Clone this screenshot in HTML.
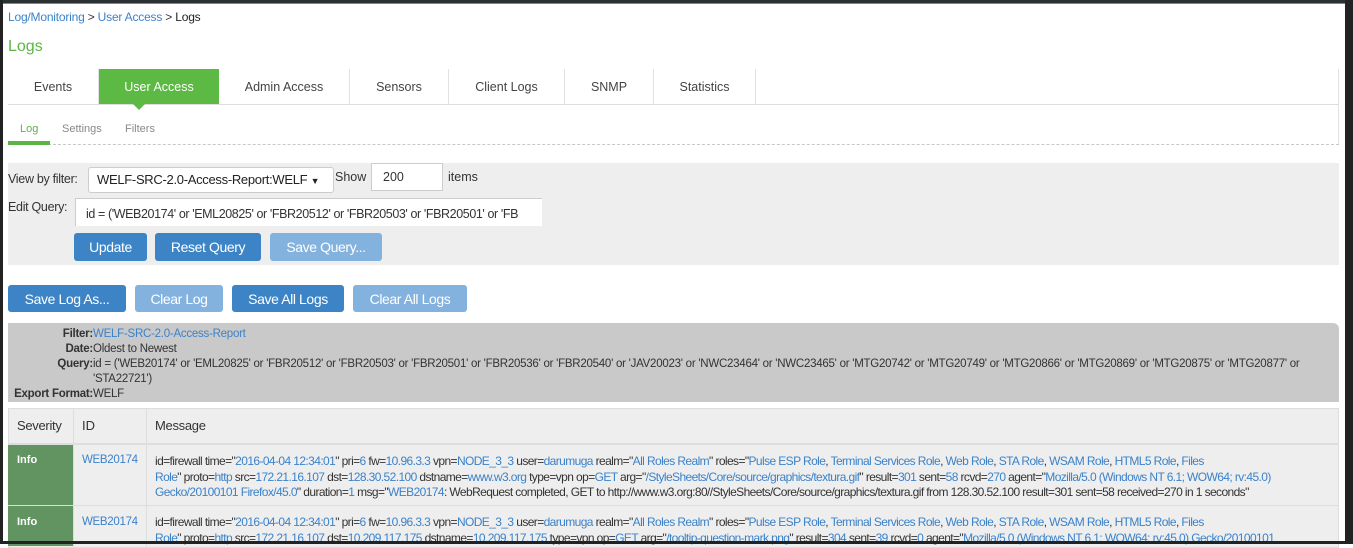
<!DOCTYPE html>
<html><head><meta charset="utf-8"><style>
*{box-sizing:border-box;margin:0;padding:0}
body{width:1353px;height:544px;overflow:hidden;background:#fff;font-family:"Liberation Sans",Arial,sans-serif;font-size:12px;color:#333;position:relative}
.a{position:absolute}
a,.l{color:#3b82c9;text-decoration:none}
.frame-t{left:0;top:0;width:1353px;height:4px;background:#2b3133;border-bottom:1px solid #4cae3c}
.frame-l{left:0;top:0;width:3px;height:544px;background:#222}
.frame-r{left:1345px;top:0;width:8px;height:544px;background:#222}
.frame-b{left:0;top:541px;width:1353px;height:3px;background:#222}
.tab{position:absolute;top:69px;height:35px;line-height:36px;text-align:center;font-size:12.5px;color:#444;border-right:1px solid #e2e2e2}
.btn{position:absolute;height:28px;line-height:28px;text-align:center;color:#fff;background:#3c84c6;border-radius:3px;font-size:14px;letter-spacing:-.4px}
.btn.d{background:#84b2de}
.msg{letter-spacing:-.6px;white-space:nowrap;line-height:15.5px;font-size:12px}
</style></head><body>
<div class="a frame-t"></div>
<div class="a" style="left:8px;top:10px;font-size:12px;letter-spacing:-.2px"><span class="l">Log/Monitoring</span> &gt; <span class="l">User Access</span> &gt; <span style="color:#222">Logs</span></div>
<div class="a" style="left:8px;top:38px;font-size:16px;color:#5cb543">Logs</div>

<div class="a" style="left:8px;top:69px;width:1331px;height:76px;border-right:1px solid #e2e2e2"></div>
<div class="a" style="left:8px;top:104px;width:1331px;height:1px;background:#ddd"></div>
<div class="tab" style="left:8px;width:91px">Events</div>
<div class="tab" style="left:99px;width:120px;background:#5cb943;color:#fff;border-right:none">User Access</div>
<div class="a" style="left:133px;top:104px;width:0;height:0;border-left:6px solid transparent;border-right:6px solid transparent;border-top:6px solid #5cb943"></div>
<div class="tab" style="left:219px;width:131px">Admin Access</div>
<div class="tab" style="left:350px;width:99px">Sensors</div>
<div class="tab" style="left:449px;width:116px">Client Logs</div>
<div class="tab" style="left:565px;width:89px">SNMP</div>
<div class="tab" style="left:654px;width:102px">Statistics</div>

<div class="a" style="left:20px;top:123px;font-size:11px;color:#5cb543">Log</div>
<div class="a" style="left:62px;top:123px;font-size:11px;color:#888">Settings</div>
<div class="a" style="left:125px;top:123px;font-size:11px;color:#888">Filters</div>
<div class="a" style="left:8px;top:144px;width:1331px;border-top:1px dashed #c8c8c8"></div>
<div class="a" style="left:8px;top:141px;width:42px;height:4px;background:#5cb543"></div>

<div class="a" style="left:8px;top:163px;width:1331px;height:102px;background:#eee"></div>
<div class="a" style="left:8px;top:172px;font-size:12.5px;letter-spacing:-.3px">View by filter:</div>
<div class="a" style="left:88px;top:167px;width:246px;height:26px;background:#fff;border:1px solid #ccc;border-radius:3px;font-size:13px;line-height:24px;padding-left:8px;color:#222;letter-spacing:-.3px">WELF-SRC-2.0-Access-Report:WELF <span style="font-size:9px">▼</span></div>
<div class="a" style="left:335px;top:170px;font-size:12.5px">Show</div>
<div class="a" style="left:371px;top:163px;width:72px;height:28px;background:#fff;border:1px solid #ccc;font-size:12.5px;line-height:26px;padding-left:11px">200</div>
<div class="a" style="left:448px;top:170px;font-size:12.5px">items</div>
<div class="a" style="left:8px;top:200px;font-size:12.5px;letter-spacing:-.3px">Edit Query:</div>
<div class="a" style="left:75px;top:198px;width:467px;height:28px;background:#fff;border:1px solid #ccc;border-bottom:none;border-right:none;font-size:12.5px;line-height:30px;padding-left:10px;white-space:nowrap;overflow:hidden;letter-spacing:-.4px">id = ('WEB20174' or 'EML20825' or 'FBR20512' or 'FBR20503' or 'FBR20501' or 'FB</div>
<div class="btn" style="left:74px;top:233px;width:73px">Update</div>
<div class="btn" style="left:155px;top:233px;width:106px">Reset Query</div>
<div class="btn d" style="left:270px;top:233px;width:112px">Save Query...</div>

<div class="btn" style="left:8px;top:285px;width:118px;height:27px">Save Log As...</div>
<div class="btn d" style="left:135px;top:285px;width:88px;height:27px">Clear Log</div>
<div class="btn" style="left:232px;top:285px;width:112px;height:27px">Save All Logs</div>
<div class="btn d" style="left:353px;top:285px;width:114px;height:27px">Clear All Logs</div>

<div class="a" style="left:8px;top:323px;width:1331px;height:79px;background:#c9c9c9;border-radius:0 6px 0 0"></div>
<div class="a" style="left:13px;top:327px;font-size:11.5px;line-height:15px;letter-spacing:-.25px;color:#333">
<div style="white-space:nowrap"><b style="display:inline-block;width:80px;text-align:right;font-weight:bold">Filter:</b><span class="l">WELF-SRC-2.0-Access-Report</span></div>
<div><b style="display:inline-block;width:80px;text-align:right">Date:</b>Oldest to Newest</div>
<div style="white-space:nowrap"><b style="display:inline-block;width:80px;text-align:right">Query:</b>id = ('WEB20174' or 'EML20825' or 'FBR20512' or 'FBR20503' or 'FBR20501' or 'FBR20536' or 'FBR20540' or 'JAV20023' or 'NWC23464' or 'NWC23465' or 'MTG20742' or 'MTG20749' or 'MTG20866' or 'MTG20869' or 'MTG20875' or 'MTG20877' or</div>
<div style="padding-left:80px">'STA22721')</div>
<div><b style="display:inline-block;width:80px;text-align:right">Export Format:</b>WELF</div>
</div>

<div class="a" style="left:8px;top:408px;width:1331px;height:140px;background:#eee;border:1px solid #ddd"></div>
<div class="a" style="left:8px;top:443px;width:1331px;height:2px;background:#ddd"></div>
<div class="a" style="left:8px;top:505px;width:1331px;height:1px;background:#ddd"></div>
<div class="a" style="left:73px;top:408px;width:1px;height:140px;background:#ddd"></div>
<div class="a" style="left:146px;top:408px;width:1px;height:140px;background:#ddd"></div>
<div class="a" style="left:17px;top:418px;font-size:13px;letter-spacing:-.3px">Severity</div>
<div class="a" style="left:82px;top:418px;font-size:13px">ID</div>
<div class="a" style="left:155px;top:418px;font-size:13px;letter-spacing:-.3px">Message</div>
<div class="a" style="left:8px;top:445px;width:65px;height:60px;background:#629461"></div>
<div class="a" style="left:8px;top:506px;width:65px;height:40px;background:#629461"></div>
<div class="a" style="left:17px;top:454px;font-size:11px;font-weight:bold;color:#fff">Info</div>
<div class="a" style="left:17px;top:516px;font-size:11px;font-weight:bold;color:#fff">Info</div>
<div class="a l" style="left:82px;top:454px;font-size:11.5px;letter-spacing:-.3px">WEB20174</div>
<div class="a l" style="left:82px;top:516px;font-size:11.5px;letter-spacing:-.3px">WEB20174</div>
<div class="a msg" style="left:155px;top:454px">id=firewall time="<span class="l">2016-04-04 12:34:01</span>" pri=<span class="l">6</span> fw=<span class="l">10.96.3.3</span> vpn=<span class="l">NODE_3_3</span> user=<span class="l">darumuga</span> realm="<span class="l">All Roles Realm</span>" roles="<span class="l">Pulse ESP Role</span>, <span class="l">Terminal Services Role</span>, <span class="l">Web Role</span>, <span class="l">STA Role</span>, <span class="l">WSAM Role</span>, <span class="l">HTML5 Role</span>, <span class="l">Files</span><br><span class="l">Role</span>" proto=<span class="l">http</span> src=<span class="l">172.21.16.107</span> dst=<span class="l">128.30.52.100</span> dstname=<span class="l">www.w3.org</span> type=vpn op=<span class="l">GET</span> arg="<span class="l">/StyleSheets/Core/source/graphics/textura.gif</span>" result=<span class="l">301</span> sent=<span class="l">58</span> rcvd=<span class="l">270</span> agent="<span class="l">Mozilla/5.0 (Windows NT 6.1; WOW64; rv:45.0)</span><br><span class="l">Gecko/20100101 Firefox/45.0</span>" duration=<span class="l">1</span> msg="<span class="l">WEB20174</span>: WebRequest completed, GET to http://www.w3.org:80//StyleSheets/Core/source/graphics/textura.gif from 128.30.52.100 result=301 sent=58 received=270 in 1 seconds"</div>
<div class="a msg" style="left:155px;top:515px">id=firewall time="<span class="l">2016-04-04 12:34:01</span>" pri=<span class="l">6</span> fw=<span class="l">10.96.3.3</span> vpn=<span class="l">NODE_3_3</span> user=<span class="l">darumuga</span> realm="<span class="l">All Roles Realm</span>" roles="<span class="l">Pulse ESP Role</span>, <span class="l">Terminal Services Role</span>, <span class="l">Web Role</span>, <span class="l">STA Role</span>, <span class="l">WSAM Role</span>, <span class="l">HTML5 Role</span>, <span class="l">Files</span><br><span class="l">Role</span>" proto=<span class="l">http</span> src=<span class="l">172.21.16.107</span> dst=<span class="l">10.209.117.175</span> dstname=<span class="l">10.209.117.175</span> type=vpn op=<span class="l">GET</span> arg="<span class="l">/tooltip-question-mark.png</span>" result=<span class="l">304</span> sent=<span class="l">39</span> rcvd=<span class="l">0</span> agent="<span class="l">Mozilla/5.0 (Windows NT 6.1; WOW64; rv:45.0) Gecko/20100101</span></div>

<div class="a frame-l"></div>
<div class="a frame-r"></div>
<div class="a frame-b"></div>
</body></html>
